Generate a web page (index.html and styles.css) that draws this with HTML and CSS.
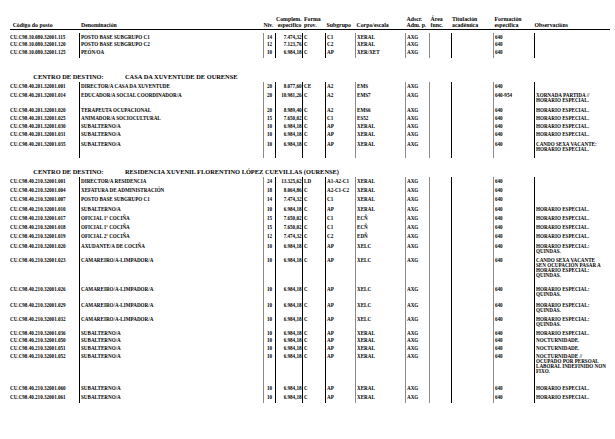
FILE: index.html
```html
<!DOCTYPE html>
<html lang="gl">
<head>
<meta charset="utf-8">
<title>Relación de postos</title>
<link rel="stylesheet" href="styles.css">
</head>
<body>
<div class="page">
  <div class="thead">
    <div class="hc hcode"><br>Código do posto</div>
    <div class="hc hden"><br>Denominación</div>
    <div class="hc hniv"><br>Niv.</div>
    <div class="hc hcomp">Complem.<br>específico</div>
    <div class="hc hforma">Forma<br>prov.</div>
    <div class="hc hsub"><br>Subgrupo</div>
    <div class="hc hcorpo"><br>Corpo/escala</div>
    <div class="hc hadscr">Adscr.<br>Adm. p.</div>
    <div class="hc harea">Área<br>func.</div>
    <div class="hc htit">Titulación<br>académica</div>
    <div class="hc hform">Formación<br>específica</div>
    <div class="hc hobs"><br>Observacións</div>
  </div>

  <div class="sec s1">
    <div class="row h77"><span class="c">CU.C98.10.080.32001.115</span><span class="d">POSTO BASE SUBGRUPO C1</span><span class="n">14</span><span class="m">7.474,32</span><span class="f">C</span><span class="s">C1</span><span class="e">XERAL</span><span class="a">AXG</span><span class="r"></span><span class="t"></span><span class="o">640</span><span class="b"></span></div>
    <div class="row h73"><span class="c">CU.C98.10.080.32001.120</span><span class="d">POSTO BASE SUBGRUPO C2</span><span class="n">12</span><span class="m">7.123,76</span><span class="f">C</span><span class="s">C2</span><span class="e">XERAL</span><span class="a">AXG</span><span class="r"></span><span class="t"></span><span class="o">640</span><span class="b"></span></div>
    <div class="row h95"><span class="c">CU.C98.10.080.32001.125</span><span class="d">PEÓN/OA</span><span class="n">10</span><span class="m">6.984,18</span><span class="f">C</span><span class="s">AP</span><span class="e">XER/XET</span><span class="a">AXG</span><span class="r"></span><span class="t"></span><span class="o">640</span><span class="b"></span></div>
  </div>

  <div class="centro c1"><span class="lbl">CENTRO DE DESTINO:</span><span>CASA DA XUVENTUDE DE OURENSE</span></div>

  <div class="sec s2">
    <div class="row h94"><span class="c">CU.C98.40.201.32001.001</span><span class="d">DIRECTOR/A CASA DA XUVENTUDE</span><span class="n">20</span><span class="m">8.077,60</span><span class="f">CE</span><span class="s">A2</span><span class="e">EMS</span><span class="a">AXG</span><span class="r"></span><span class="t"></span><span class="o">640</span><span class="b"></span></div>
    <div class="row h15"><span class="c">CU.C98.40.201.32001.014</span><span class="d">EDUCADOR/A SOCIAL COORDINADOR/A</span><span class="n">20</span><span class="m">10.981,26</span><span class="f">C</span><span class="s">A2</span><span class="e">EMS7</span><span class="a">AXG</span><span class="r"></span><span class="t"></span><span class="o">640-954</span><span class="b">XORNADA PARTIDA //<br>HORARIO ESPECIAL.</span></div>
    <div class="row h83"><span class="c">CU.C98.40.201.32001.020</span><span class="d">TERAPEUTA OCUPACIONAL</span><span class="n">20</span><span class="m">8.989,40</span><span class="f">C</span><span class="s">A2</span><span class="e">EMS6</span><span class="a">AXG</span><span class="r"></span><span class="t"></span><span class="o">640</span><span class="b">HORARIO ESPECIAL.</span></div>
    <div class="row h8"><span class="c">CU.C98.40.201.32001.025</span><span class="d">ANIMADOR/A SOCIOCULTURAL</span><span class="n">15</span><span class="m">7.650,02</span><span class="f">C</span><span class="s">C1</span><span class="e">ES52</span><span class="a">AXG</span><span class="r"></span><span class="t"></span><span class="o">640</span><span class="b">HORARIO ESPECIAL.</span></div>
    <div class="row h8"><span class="c">CU.C98.40.201.32001.030</span><span class="d">SUBALTERNO/A</span><span class="n">10</span><span class="m">6.984,18</span><span class="f">C</span><span class="s">AP</span><span class="e">XERAL</span><span class="a">AXG</span><span class="r"></span><span class="t"></span><span class="o">640</span><span class="b">HORARIO ESPECIAL.</span></div>
    <div class="row h95"><span class="c">CU.C98.40.201.32001.031</span><span class="d">SUBALTERNO/A</span><span class="n">10</span><span class="m">6.984,18</span><span class="f">C</span><span class="s">AP</span><span class="e">XERAL</span><span class="a">AXG</span><span class="r"></span><span class="t"></span><span class="o">640</span><span class="b">HORARIO ESPECIAL.</span></div>
    <div class="row h175"><span class="c">CU.C98.40.201.32001.035</span><span class="d">SUBALTERNO/A</span><span class="n">10</span><span class="m">6.984,18</span><span class="f">C</span><span class="s">AP</span><span class="e">XERAL</span><span class="a">AXG</span><span class="r"></span><span class="t"></span><span class="o">640</span><span class="b">CANDO SEXA VACANTE:<br>HORARIO ESPECIAL.</span></div>
  </div>

  <div class="centro c2"><span class="lbl">CENTRO DE DESTINO:</span><span>RESIDENCIA XUVENIL FLORENTINO LÓPEZ CUEVILLAS (OURENSE)</span></div>

  <div class="sec s3">
    <div class="row h9"><span class="c">CU.C98.40.210.32001.001</span><span class="d">DIRECTOR/A RESIDENCIA</span><span class="n">24</span><span class="m">13.325,62</span><span class="f">LD</span><span class="s">A1-A2-C1</span><span class="e">XERAL</span><span class="a">AXG</span><span class="r"></span><span class="t"></span><span class="o">640</span><span class="b"></span></div>
    <div class="row h93"><span class="c">CU.C98.40.210.32001.004</span><span class="d">XEFATURA DE ADMINISTRACIÓN</span><span class="n">18</span><span class="m">8.064,86</span><span class="f">C</span><span class="s">A2-C1-C2</span><span class="e">XERAL</span><span class="a">AXG</span><span class="r"></span><span class="t"></span><span class="o">640</span><span class="b"></span></div>
    <div class="row h93"><span class="c">CU.C98.40.210.32001.007</span><span class="d">POSTO BASE SUBGRUPO C1</span><span class="n">14</span><span class="m">7.474,32</span><span class="f">C</span><span class="s">C1</span><span class="e">XERAL</span><span class="a">AXG</span><span class="r"></span><span class="t"></span><span class="o">640</span><span class="b"></span></div>
    <div class="row h93"><span class="c">CU.C98.40.210.32001.010</span><span class="d">SUBALTERNO/A</span><span class="n">10</span><span class="m">6.984,18</span><span class="f">C</span><span class="s">AP</span><span class="e">XERAL</span><span class="a">AXG</span><span class="r"></span><span class="t"></span><span class="o">640</span><span class="b">HORARIO ESPECIAL.</span></div>
    <div class="row h93"><span class="c">CU.C98.40.210.32001.017</span><span class="d">OFICIAL 1ª COCIÑA</span><span class="n">15</span><span class="m">7.650,02</span><span class="f">C</span><span class="s">C1</span><span class="e">ECÑ</span><span class="a">AXG</span><span class="r"></span><span class="t"></span><span class="o">640</span><span class="b">HORARIO ESPECIAL.</span></div>
    <div class="row h93"><span class="c">CU.C98.40.210.32001.018</span><span class="d">OFICIAL 1ª COCIÑA</span><span class="n">15</span><span class="m">7.650,02</span><span class="f">C</span><span class="s">C1</span><span class="e">ECÑ</span><span class="a">AXG</span><span class="r"></span><span class="t"></span><span class="o">640</span><span class="b">HORARIO ESPECIAL.</span></div>
    <div class="row h93"><span class="c">CU.C98.40.210.32001.019</span><span class="d">OFICIAL 2ª COCIÑA</span><span class="n">12</span><span class="m">7.474,32</span><span class="f">C</span><span class="s">C2</span><span class="e">EDÑ</span><span class="a">AXG</span><span class="r"></span><span class="t"></span><span class="o">640</span><span class="b">HORARIO ESPECIAL.</span></div>
    <div class="row h14"><span class="c">CU.C98.40.210.32001.020</span><span class="d">AXUDANTE/A DE COCIÑA</span><span class="n">10</span><span class="m">6.984,18</span><span class="f">C</span><span class="s">AP</span><span class="e">XELC</span><span class="a">AXG</span><span class="r"></span><span class="t"></span><span class="o">640</span><span class="b">HORARIO ESPECIAL:<br>QUINDAS.</span></div>
    <div class="row h29"><span class="c">CU.C98.40.210.32001.023</span><span class="d">CAMAREIRO/A-LIMPADOR/A</span><span class="n">10</span><span class="m">6.984,18</span><span class="f">C</span><span class="s">AP</span><span class="e">XELC</span><span class="a">AXG</span><span class="r"></span><span class="t"></span><span class="o">640</span><span class="b">CANDO SEXA VACANTE<br>SEN OCUPACIÓN PASAR A<br>HORARIO ESPECIAL:<br>QUINDAS.</span></div>
    <div class="row h16"><span class="c">CU.C98.40.210.32001.026</span><span class="d">CAMAREIRO/A-LIMPADOR/A</span><span class="n">10</span><span class="m">6.984,18</span><span class="f">C</span><span class="s">AP</span><span class="e">XELC</span><span class="a">AXG</span><span class="r"></span><span class="t"></span><span class="o">640</span><span class="b">HORARIO ESPECIAL:<br>QUINDAS.</span></div>
    <div class="row h14"><span class="c">CU.C98.40.210.32001.029</span><span class="d">CAMAREIRO/A-LIMPADOR/A</span><span class="n">10</span><span class="m">6.984,18</span><span class="f">C</span><span class="s">AP</span><span class="e">XELC</span><span class="a">AXG</span><span class="r"></span><span class="t"></span><span class="o">640</span><span class="b">HORARIO ESPECIAL:<br>QUINDAS.</span></div>
    <div class="row h14"><span class="c">CU.C98.40.210.32001.032</span><span class="d">CAMAREIRO/A-LIMPADOR/A</span><span class="n">10</span><span class="m">6.984,18</span><span class="f">C</span><span class="s">AP</span><span class="e">XELC</span><span class="a">AXG</span><span class="r"></span><span class="t"></span><span class="o">640</span><span class="b">HORARIO ESPECIAL:<br>QUINDAS.</span></div>
    <div class="row h73"><span class="c">CU.C98.40.210.32001.036</span><span class="d">SUBALTERNO/A</span><span class="n">10</span><span class="m">6.984,18</span><span class="f">C</span><span class="s">AP</span><span class="e">XERAL</span><span class="a">AXG</span><span class="r"></span><span class="t"></span><span class="o">640</span><span class="b">HORARIO ESPECIAL.</span></div>
    <div class="row h75"><span class="c">CU.C98.40.210.32001.050</span><span class="d">SUBALTERNO/A</span><span class="n">10</span><span class="m">6.984,18</span><span class="f">C</span><span class="s">AP</span><span class="e">XERAL</span><span class="a">AXG</span><span class="r"></span><span class="t"></span><span class="o">640</span><span class="b">NOCTURNIDADE.</span></div>
    <div class="row h83"><span class="c">CU.C98.40.210.32001.051</span><span class="d">SUBALTERNO/A</span><span class="n">10</span><span class="m">6.984,18</span><span class="f">C</span><span class="s">AP</span><span class="e">XERAL</span><span class="a">AXG</span><span class="r"></span><span class="t"></span><span class="o">640</span><span class="b">NOCTURNIDADE.</span></div>
    <div class="row h32"><span class="c">CU.C98.40.210.32001.052</span><span class="d">SUBALTERNO/A</span><span class="n">10</span><span class="m">6.984,18</span><span class="f">C</span><span class="s">AP</span><span class="e">XERAL</span><span class="a">AXG</span><span class="r"></span><span class="t"></span><span class="o">640</span><span class="b">NOCTURNIDADE //<br>OCUPADO POR PERSOAL<br>LABORAL INDEFINIDO NON<br>FIXO.</span></div>
    <div class="row h9"><span class="c">CU.C98.40.210.32001.060</span><span class="d">SUBALTERNO/A</span><span class="n">10</span><span class="m">6.984,18</span><span class="f">C</span><span class="s">AP</span><span class="e">XERAL</span><span class="a">AXG</span><span class="r"></span><span class="t"></span><span class="o">640</span><span class="b">HORARIO ESPECIAL.</span></div>
    <div class="row h10"><span class="c">CU.C98.40.210.32001.061</span><span class="d">SUBALTERNO/A</span><span class="n">10</span><span class="m">6.984,18</span><span class="f">C</span><span class="s">AP</span><span class="e">XERAL</span><span class="a">AXG</span><span class="r"></span><span class="t"></span><span class="o">640</span><span class="b">HORARIO ESPECIAL.</span></div>
  </div>
</div>
</body>
</html>
```

FILE: styles.css
```css
* { box-sizing: border-box; }

html, body {
  margin: 0;
  padding: 0;
  background: #ffffff;
}

body {
  font-family: "Liberation Serif", "Times New Roman", serif;
  font-weight: bold;
  color: #000;
}

.page {
  width: 615px;
  padding: 16px 5px 0 10px;
}

.thead,
.row {
  display: grid;
  grid-template-columns: 69px 184px 12px 27px 23px 30px 50px 24px 22px 42px 41px 76px;
}

.thead {
  font-size: 5.8px;
  line-height: 6px;
  border-bottom: 1px solid #000;
  padding-bottom: 1px;
}

.hc {
  white-space: nowrap;
  padding-left: 1px;
}

.hcode { padding-left: 2.7px; }
.hden { padding-left: 2px; }
.hniv { padding-left: 0.5px; }
.hcomp { text-align: right; padding-right: 0.5px; }
.hforma { padding-left: 2px; }
.hsub { padding-left: 1.5px; }
.hcorpo { padding-left: 1.5px; }
.hadscr { padding-left: 1.5px; }
.harea { padding-left: 1.5px; }
.htit { padding-left: 1px; }
.hform { padding-left: 1.5px; }
.hobs { padding-left: 0.5px; }

.sec {
  font-size: 5.1px;
}

.s1 { margin-top: 3.3px; }
.s2 { margin-top: 1.3px; }
.s3 { margin-top: 1.5px; }

.row > span {
  border-left: 1px solid #000;
  padding: 1.5px 0 0 1px;
  line-height: 5px;
  white-space: nowrap;
}

.row > .c {
  border-left: none;
  padding-left: 0;
}

.row > .n {
  text-align: center;
  padding-left: 0;
  border-left-color: #8a8a8a;
}

.row > .m {
  text-align: right;
  padding-right: 0.5px;
}

.row > .e,
.row > .a,
.row > .r,
.row > .o {
  border-left-color: #8a8a8a;
}

.h73 { height: 7.3px; }
.h75 { height: 7.5px; }
.h77 { height: 7.7px; }
.h8 { height: 8px; }
.h83 { height: 8.3px; }
.h9 { height: 9px; }
.h93 { height: 9.3px; }
.h94 { height: 9.4px; }
.h95 { height: 9.5px; }
.h10 { height: 10px; }
.h14 { height: 14px; }
.h15 { height: 15px; }
.h16 { height: 16px; }
.h175 { height: 17.5px; }
.h29 { height: 29px; }
.h32 { height: 32px; }

.centro {
  font-size: 6.4px;
  line-height: 8px;
  padding-left: 23.3px;
  white-space: nowrap;
}

.c1 { margin-top: 15.2px; }
.c2 { margin-top: 10px; }

.centro .lbl {
  display: inline-block;
  width: 91.7px;
}
```
